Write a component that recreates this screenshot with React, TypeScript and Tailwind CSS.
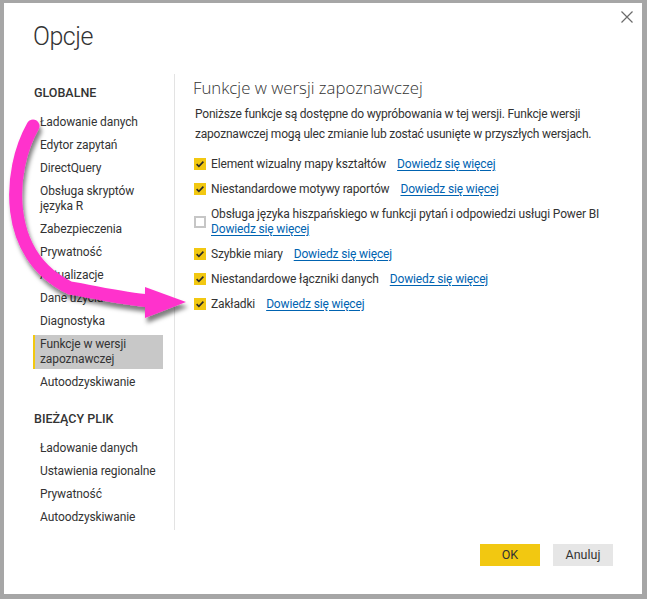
import React from "react";

function Check({ checked }: { checked: boolean }) {
  if (!checked) {
    return <div className="w-[12px] h-[12px] shrink-0 mr-[5px] border-2 border-[#c6c6c6] bg-white" />;
  }
  return (
    <div className="w-[12px] h-[12px] shrink-0 mr-[5px] bg-[#f2c811] flex items-center justify-center">
      <svg width="12" height="12" viewBox="0 0 12 12">
        <path d="M2.6 6.2 L4.9 8.4 L9.4 3.6" fill="none" stroke="#2b2b2b" strokeWidth="1.6" />
      </svg>
    </div>
  );
}

function Link() {
  return <span className="text-[#0063b1] underline underline-offset-2">Dowiedz się więcej</span>;
}

export default function App() {
  const globalItems: React.ReactNode[] = [
    "Ładowanie danych",
    "Edytor zapytań",
    "DirectQuery",
    <>Obsługa skryptów<br />języka R</>,
    "Zabezpieczenia",
    "Prywatność",
    "Aktualizacje",
    "Dane użycia",
    "Diagnostyka",
  ];
  const fileItems = ["Ładowanie danych", "Ustawienia regionalne", "Prywatność", "Autoodzyskiwanie"];
  const rows: { label: string; checked: boolean; wrap?: boolean }[] = [
    { label: "Element wizualny mapy kształtów", checked: true },
    { label: "Niestandardowe motywy raportów", checked: true },
    { label: "Obsługa języka hiszpańskiego w funkcji pytań i odpowiedzi usługi Power BI", checked: false, wrap: true },
    { label: "Szybkie miary", checked: true },
    { label: "Niestandardowe łączniki danych", checked: true },
    { label: "Zakładki", checked: true },
  ];
  return (
    <div className="relative w-[647px] h-[599px] bg-[#a6a6a6] pt-[3px] pl-[4px] pr-[5px] pb-[5px] font-['Roboto',sans-serif] text-[#333] whitespace-nowrap">
      <div className="h-full bg-white flex flex-col">
        <div className="h-[71px] flex justify-between items-start shrink-0">
          <div className="pl-[29px] pt-[16px] text-[25px] leading-[36px] font-light tracking-[-0.5px] text-[#333]">Opcje</div>
          <svg className="mt-[8px] mr-[9px]" width="12" height="12" viewBox="0 0 12 12">
            <path d="M0.5 0.5 L11.5 11.5 M11.5 0.5 L0.5 11.5" stroke="#6b6b6b" strokeWidth="1.2" />
          </svg>
        </div>
        <div className="flex flex-1 min-h-0">
          <div className="w-[171px] shrink-0 self-start pl-[29px] pr-[11px] pt-[9px] pb-[1.5px] border-r border-[#e3e3e3] text-[12px] tracking-[-0.1px]">
            <div className="leading-[20px] font-medium text-[12.5px] tracking-[0px] mb-[7.5px] pl-[1px]">GLOBALNE</div>
            {globalItems.map((it, i) => (
              <div key={i} className="pl-[7px] py-[4px] leading-[15px]">{it}</div>
            ))}
            <div className="my-[2px] py-[2px] leading-[15px] bg-[#c8c8c8] border-l-2 border-[#f2c811] pl-[5px]">
              Funkcje w wersji<br />zapoznawczej
            </div>
            <div className="pl-[7px] py-[4px] leading-[15px]">Autoodzyskiwanie</div>
            <div className="leading-[20px] font-medium text-[12.5px] tracking-[0px] mt-[15.5px] mb-[7.5px] pl-[1px]">BIEŻĄCY PLIK</div>
            {fileItems.map((it, i) => (
              <div key={i} className="pl-[7px] py-[4px] leading-[15px]">{it}</div>
            ))}
          </div>
          <div className="flex-1 pl-[19px] pt-[2px] text-[12px] tracking-[-0.15px]">
            <div className="-ml-[1px] text-[16.8px] tracking-[0px] leading-[24px] font-light font-['Open_Sans',sans-serif] text-[#333]">Funkcje w wersji zapoznawczej</div>
            <div className="mt-[4px] leading-[20px] pl-[1px] tracking-[-0.2px]">
              Poniższe funkcje są dostępne do wypróbowania w tej wersji. Funkcje wersji<br />
              zapoznawczej mogą ulec zmianie lub zostać usunięte w przyszłych wersjach.
            </div>
            <div className="mt-[7.5px]">
              {rows.map((r, i) => (
                <div key={i} className="flex items-center py-[5px] leading-[15px]">
                  <Check checked={r.checked} />
                  {r.wrap ? (
                    <div>
                      <div>{r.label}</div>
                      <div><Link /></div>
                    </div>
                  ) : (
                    <div className="flex">
                      <span>{r.label}</span>
                      <span className="ml-[11px]"><Link /></span>
                    </div>
                  )}
                </div>
              ))}
            </div>
          </div>
        </div>
        <div className="flex justify-end gap-[13px] pr-[29px] pb-[28px] shrink-0">
          <button className="w-[60px] h-[22px] bg-[#f2c811] text-[12.5px] text-[#333]">OK</button>
          <button className="w-[60px] h-[22px] bg-[#e6e6e6] text-[12.5px] text-[#333]">Anuluj</button>
        </div>
      </div>
      <svg className="absolute inset-0 pointer-events-none" width="647" height="599" viewBox="0 0 647 599">
        <defs>
          <filter id="sh" x="-20%" y="-20%" width="140%" height="140%">
            <feDropShadow dx="2" dy="5" stdDeviation="2.2" floodColor="#000" floodOpacity="0.5" />
          </filter>
        </defs>
        <g filter="url(#sh)">
          <path d="M33 126 C 8 170, 2 255, 70 288 C 95 292, 122 299, 150 301" fill="none" stroke="#ff33cc" strokeWidth="13" strokeLinecap="round" />
          <polygon points="145,287 186,302 145,318" fill="#ff33cc" />
        </g>
      </svg>
    </div>
  );
}
